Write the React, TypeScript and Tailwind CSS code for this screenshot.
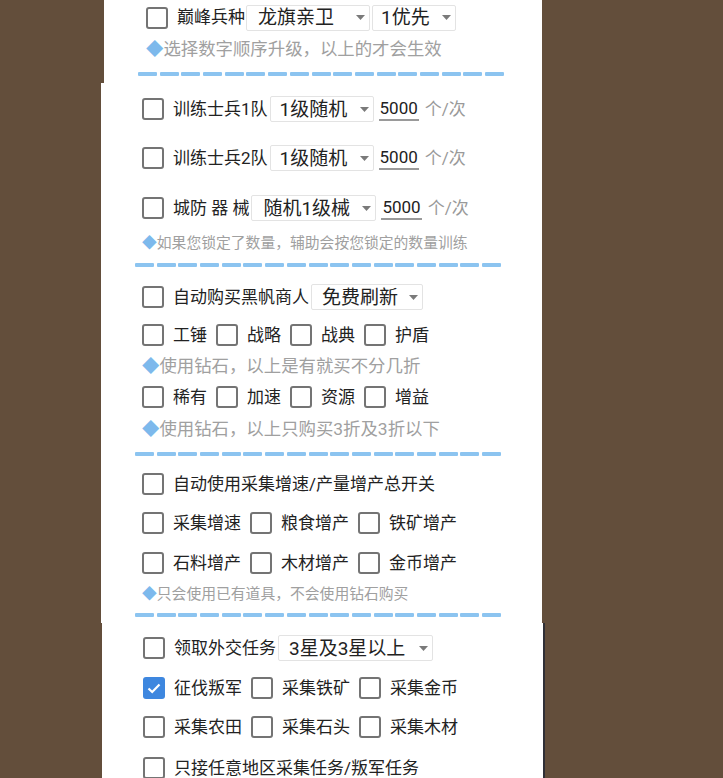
import React from 'react';

const Checkbox: React.FC<{ checked?: boolean }> = ({ checked }) =>
  checked ? (
    <div className="w-[22px] h-[22px] rounded-[3px] bg-[#3e87df] flex items-center justify-center shrink-0">
      <svg width="16" height="16" viewBox="0 0 16 16">
        <polyline points="2.5,8.5 6.2,12 13.5,4.5" fill="none" stroke="#fff" strokeWidth="2.2" />
      </svg>
    </div>
  ) : (
    <div className="w-[22px] h-[22px] rounded-[3px] border-2 border-[#747474] shrink-0" />
  );

const Select: React.FC<{ text: string; w: string; pl: string }> = ({ text, w, pl }) => (
  <div className={`${w} ${pl} h-[26px] border border-[#e3e3e3] rounded-[2px] flex items-center justify-between pr-[4px] text-[19px] text-[#222] shrink-0`}>
    <span>{text}</span>
    <svg width="9" height="5" viewBox="0 0 9 5">
      <polygon points="0,0 9,0 4.5,5" fill="#7a7a7a" />
    </svg>
  </div>
);

const Dash = () => (
  <div className="ml-[34px] flex gap-[2.7px]">
    {Array.from({ length: 17 }).map((_, i) => (
      <div key={i} className="h-[4px] w-[19px] rounded-[1px] bg-[#8cc4f0]" />
    ))}
  </div>
);

const Hint: React.FC<{ text: string; size: string; mt: string }> = ({ text, size, mt }) => (
  <div className={`${mt} ${size} h-[24px] pl-[41px] flex items-center text-[#a0a0a0]`}>
    <span className="text-[#7db9ec]">◆</span>
    <span>{text}</span>
  </div>
);

const Item: React.FC<{ label: string; checked?: boolean }> = ({ label, checked }) => (
  <div className="flex items-center gap-[9px]">
    <Checkbox checked={checked} />
    <span>{label}</span>
  </div>
);

const Group: React.FC<{ items: string[]; mt: string; checked?: number }> = ({ items, mt, checked }) => (
  <div className={`${mt} h-[28px] pl-[41px] flex items-center gap-[9px] text-[17px] text-[#222]`}>
    {items.map((t, i) => (
      <Item key={t} label={t} checked={checked === i} />
    ))}
  </div>
);

const Train: React.FC<{ label: string; opt: string; w: string; pl: string; mt: string }> = ({ label, opt, w, pl, mt }) => (
  <div className={`${mt} h-[28px] pl-[41px] flex items-center text-[17px] text-[#222]`}>
    <Checkbox />
    <span className="ml-[9px] mr-[2px] whitespace-pre">{label}</span>
    <Select text={opt} w={w} pl={pl} />
    <span className="ml-[5px] border-b-2 border-[#9a9a9a] leading-[22px] px-[1px]">5000</span>
    <span className="ml-[6px] text-[#999]">个/次</span>
  </div>
);

const App: React.FC = () => {
  return (
    <div className="w-[723px] h-[778px] overflow-hidden bg-[#634e3b] font-[Roboto,'Noto_Sans_CJK_SC',sans-serif] leading-none">
      {/* panel 1 */}
      <div className="ml-[104px] w-[438px] h-[83px] bg-white">
        <div className="h-[35px] pl-[42px] flex items-center text-[17px] text-[#222]">
          <Checkbox />
          <span className="ml-[9px] mr-[1px]">巅峰兵种</span>
          <Select text="龙旗亲卫" w="w-[124px]" pl="pl-[11px]" />
          <div className="w-[2px]" />
          <Select text="1优先" w="w-[84px]" pl="pl-[8px]" />
        </div>
        <div className="h-[30px] pl-[42px] flex items-center text-[17.4px] text-[#a0a0a0]">
          <span className="text-[#7db9ec]">◆</span>
          <span>选择数字顺序升级，以上的才会生效</span>
        </div>
        <div className="h-[18px] flex items-center">
          <Dash />
        </div>
      </div>

      {/* panel 2 */}
      <div className="ml-[101px] w-[441px] h-[540px] bg-white flex flex-col">
        <Train label="训练士兵1队" opt="1级随机" w="w-[104px]" pl="pl-[9px]" mt="mt-[12px]" />
        <Train label="训练士兵2队" opt="1级随机" w="w-[104px]" pl="pl-[9px]" mt="mt-[21px]" />
        <Train label="城防 器 械" opt="随机1级械" w="w-[125px]" pl="pl-[11px]" mt="mt-[22px]" />
        <Hint text="如果您锁定了数量，辅助会按您锁定的数量训练" size="text-[14.8px]" mt="mt-[9px]" />
        <div className="mt-[8px]">
          <Dash />
        </div>

        <div className="mt-[16px] h-[28px] pl-[41px] flex items-center text-[17px] text-[#222]">
          <Checkbox />
          <span className="ml-[9px] mr-[2px]">自动购买黑帆商人</span>
          <Select text="免费刷新" w="w-[112px]" pl="pl-[10px]" />
        </div>
        <Group items={['工锤', '战略', '战典', '护盾']} mt="mt-[10px]" />
        <Hint text="使用钻石，以上是有就买不分几折" size="text-[17.4px]" mt="mt-[6px]" />
        <Group items={['稀有', '加速', '资源', '增益']} mt="mt-[4px]" />
        <Hint text="使用钻石，以上只购买3折及3折以下" size="text-[17.4px]" mt="mt-[7px]" />
        <div className="mt-[10px]">
          <Dash />
        </div>

        <Group items={['自动使用采集增速/产量增产总开关']} mt="mt-[14px]" />
        <Group items={['采集增速', '粮食增产', '铁矿增产']} mt="mt-[11px]" />
        <Group items={['石料增产', '木材增产', '金币增产']} mt="mt-[12px]" />
        <Hint text="只会使用已有道具，不会使用钻石购买" size="text-[14.8px]" mt="mt-[5px]" />
        <div className="mt-[7px]">
          <Dash />
        </div>
      </div>

      {/* panel 3 */}
      <div className="ml-[102px] w-[443px] h-[160px] bg-white border-r-2 border-[#2f2f36] flex flex-col">
        <div className="mt-[11px] h-[28px] pl-[41px] flex items-center text-[17px] text-[#222]">
          <Checkbox />
          <span className="ml-[9px] mr-[2px]">领取外交任务</span>
          <Select text="3星及3星以上" w="w-[155px]" pl="pl-[10px]" />
        </div>
        <Group items={['征伐叛军', '采集铁矿', '采集金币']} mt="mt-[12px]" checked={0} />
        <Group items={['采集农田', '采集石头', '采集木材']} mt="mt-[11px]" />
        <Group items={['只接任意地区采集任务/叛军任务']} mt="mt-[13px]" />
      </div>
    </div>
  );
};

export default App;
